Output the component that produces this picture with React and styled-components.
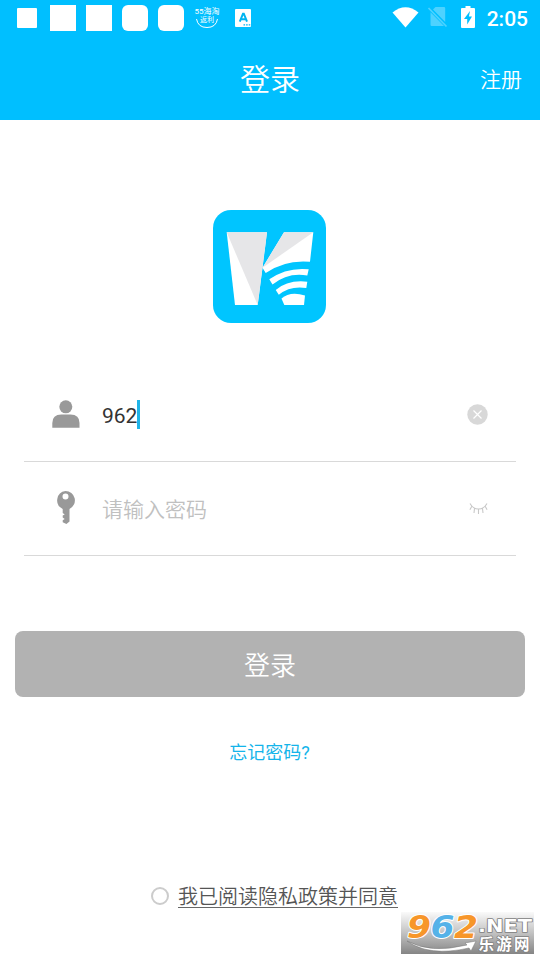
import React, { useState } from 'react'
import styled, { createGlobalStyle } from 'styled-components'

const GlobalStyle = createGlobalStyle`
  * {
    box-sizing: border-box;
  }
  body {
    margin: 0;
    background: #fff;
    font-family: Roboto, 'Noto Sans CJK SC', sans-serif;
  }
  svg {
    display: block;
    flex: none;
    overflow: visible;
  }
`

const Page = styled.div`
  position: relative;
  width: 540px;
  height: 960px;
  overflow: hidden;
  background: #fff;
`

const StatusBar = styled.div`
  display: flex;
  justify-content: space-between;
  height: 36px;
  padding: 0 12px 0 17px;
  background: #00bfff;
  color: #fff;
`

const StatusGroup = styled.div`
  display: flex;
  align-items: center;
`

const SystemIcons = styled.div`
  display: flex;
  align-items: center;
  height: 36px;
  padding-bottom: 2px;
`

const AppSquare = styled.i`
  width: ${(props) => props.$size}px;
  height: ${(props) => props.$size}px;
  margin-right: ${(props) => props.$gap}px;
  border-radius: ${(props) => props.$radius || 0}px;
  background: #fff;
`

const MiniApp = styled.div`
  display: flex;
  flex-direction: column;
  align-items: center;
  width: 26px;
  height: 24px;
  margin-right: 15px;
  padding-top: 1px;
  white-space: nowrap;
  line-height: 9px;
  svg {
    margin-top: -7px;
  }
`

const MiniLabel = styled.span`
  font-size: ${(props) => props.$size}px;
`

const Clock = styled.span`
  margin-left: 12px;
  padding-top: 2px;
  font-size: 21px;
  font-weight: 500;
  line-height: 34px;
`

const NavBar = styled.header`
  display: grid;
  grid-template-columns: 1fr auto 1fr;
  align-items: center;
  height: 84px;
  padding: 3px 18px 0;
  background: #00bfff;
  color: #fff;
`

const Title = styled.h1`
  grid-column: 2;
  margin: 0;
  font-size: 30px;
  font-weight: 350;
  line-height: 40px;
`

const Register = styled.a`
  justify-self: end;
  font-size: 21px;
  font-weight: 350;
  line-height: 30px;
`

const LogoWrap = styled.div`
  display: flex;
  justify-content: center;
  padding: 90px 1px 0 0;
  height: 248px;
`

const Form = styled.div`
  margin: 0 24px;
`

const Field = styled.label`
  display: flex;
  align-items: center;
  height: 94px;
  padding: 0 28.5px 1px 28px;
  border-bottom: 1px solid #d9d9d9;
`

const FieldText = styled.div`
  flex: 1;
  display: flex;
  align-items: center;
  margin-left: 22px;
  padding-top: 3px;
  font-size: 21px;
  font-weight: ${(props) => (props.$empty ? 350 : 400)};
  line-height: 30px;
  color: ${(props) => (props.$empty ? '#c0c0c0' : '#333')};
`

const Caret = styled.i`
  width: 3px;
  height: 29px;
  margin-top: -2px;
  background: #1fb4e8;
`

const LoginButton = styled.button`
  display: block;
  width: 510px;
  height: 66px;
  margin: 75px auto 0;
  padding: 0 0 1px;
  border: 0;
  border-radius: 8px;
  background: #b2b2b2;
  color: #fff;
  font-family: inherit;
  font-size: 26px;
  font-weight: 350;
`

const Forgot = styled.a`
  display: block;
  margin: 42px 1px 0 0;
  text-align: center;
  font-size: 18px;
  line-height: 28px;
  color: #14b4ea;
`

const Agreement = styled.div`
  display: flex;
  align-items: center;
  margin: 115px 0 0 151px;
`

const Radio = styled.i`
  width: 18px;
  height: 18px;
  margin: 2px 9px 0 0;
  border: 2px solid #ccc;
  border-radius: 50%;
`

const AgreementLink = styled.span`
  height: 26px;
  line-height: 30px;
  border-bottom: 1px solid #666;
  font-size: 20px;
  font-weight: 350;
  color: #555;
`

const Watermark = styled.div`
  position: absolute;
  left: 401px;
  top: 912px;
  width: 133px;
  height: 42px;
  background: linear-gradient(#fafafa, #c2c2c2 50%, #858585);
`

const AppLogo = () => (
  <svg width="113" height="113" viewBox="0 0 113 113">
    <rect width="113" height="113" rx="18" fill="#00c5ff" />
    <path d="M13.7 22.3H54L44.7 95H22Z" fill="#fff" />
    <path d="M13.7 22.3H54L44.7 95Z" fill="#e6e6e8" />
    <path d="M71 22.3H100.3L97 51.7Q72 49.5 52.7 63L49.5 57.7Z" fill="#fff" />
    <path d="M71 22.3H100.3L49.5 57.7Z" fill="#e6e6e8" />
    <path d="M56.3 69.3Q74 57 95.7 59.3L94.3 65.5Q75 62 59.5 74.5Z" fill="#fff" />
    <path d="M62.7 80Q75 69.5 94.3 71.7L93.3 78Q77 75.5 65.8 84.8Z" fill="#fff" />
    <path d="M68.5 88.5Q77 81 92 85.500L91 95H71.3Z" fill="#fff" />
  </svg>
)

const TranslateIcon = () => (
  <svg width="17" height="18" viewBox="0 0 17 18">
    <rect width="16" height="18" rx="1" fill="#fff" />
    <path d="M4.800 12.700 8 4.700h.8l3.200 8M5.900 10.200h5" fill="none" stroke="#00b4f0" strokeWidth="2" />
    <path d="M8.500 15.800h1.600m1 0h1.600m1 0h1.600" stroke="#00b4f0" strokeWidth="1.300" />
  </svg>
)

const WifiIcon = () => (
  <svg width="27" height="21" viewBox="0 0 27 21">
    <path d="M.5 5.500Q13.500-5.200 26.500 5.500L13.500 20.500Z" fill="#fff" />
  </svg>
)

const NoSimIcon = () => (
  <svg width="20" height="22" viewBox="0 0 20 22">
    <path d="M7.500 1H16q1.200 0 1.200 1.200V16L5 3.600ZM2.500 6.200 16 20H3.700q-1.200 0-1.200-1.200Z" fill="#4dd2ff" />
    <path d="m.5 2 18 18.500" stroke="#4dd2ff" strokeWidth="1.700" />
  </svg>
)

const BatteryIcon = () => (
  <svg width="14" height="22" viewBox="0 0 14 22">
    <path d="M4.500 0h5v2H13q1 0 1 1v18q0 1-1 1H1q-1 0-1-1V3q0-1 1-1h3.500Z" fill="#fff" />
    <path d="M9 5 3 13h3.200v5.500L11 10.500H7.900Z" fill="#00bfff" />
  </svg>
)

const UserIcon = () => (
  <svg width="28" height="28" viewBox="0 0 28 28">
    <circle cx="13.800" cy="6.800" r="6.500" fill="#999" />
    <path d="M.3 27.700V23q0-8.500 9-8.500h9.200q9 0 9 8.500v4.700Z" fill="#999" />
  </svg>
)

const KeyIcon = () => (
  <svg width="28" height="34" viewBox="0 0 28 34">
    <path
      fillRule="evenodd"
      d="M13.500 0a9.400 9.400 0 0 1 4 17.900V30.500L14.400 33 10.700 31.300v-2l2-1.200-2-1.500v-2l2-1.200-2-1.500v-4A9.400 9.400 0 0 1 13.500 0Zm0 2.600a3 3 0 1 0 0 6 3 3 0 0 0 0-6Z"
      fill="#999"
    />
  </svg>
)

const ClearIcon = () => (
  <svg width="21" height="21" viewBox="0 0 21 21">
    <circle cx="10.500" cy="10.500" r="10.200" fill="#d8d8d8" />
    <path d="m6.500 6.500 8 8m0-8-8 8" stroke="#fff" strokeWidth="1.200" />
  </svg>
)

const EyeClosedIcon = () => (
  <svg width="19" height="13" viewBox="0 0 19 13">
    <path
      d="M1 1.500Q4 7 9.500 7T18 1.500M2.700 4.500.9 7.800M5.500 6.500 5 11M9.500 7v5M13.500 6.500 14 11M16.300 4.500l1.800 3.300"
      fill="none"
      stroke="#c8c8c8"
      strokeWidth="1.100"
    />
  </svg>
)

const digits = [
  { char: '9', x: 6, color: '#f7962a' },
  { char: '6', x: 29.5, color: '#55b2e8' },
  { char: '2', x: 53, color: '#f7962a' },
]

const SiteMark = () => (
  <svg width="133" height="42" viewBox="0 0 133 42">
    <g fontFamily="'DejaVu Sans', sans-serif" fontWeight="700" fontStyle="italic" fontSize="32">
      {digits.map((d) => (
        <text
          key={d.char}
          x={d.x}
          y="26"
          textLength="24"
          lengthAdjust="spacingAndGlyphs"
          fill={d.color}
          stroke="#fff"
          strokeWidth="2"
          paintOrder="stroke"
          strokeLinejoin="round">
          {d.char}
        </text>
      ))}
    </g>
    <path d="M6 29Q29 42 66 33L64 31 75 29 70 39 68 36Q28 45 6 29Z" fill="#fff" stroke="#777" strokeWidth=".5" />
    <g fill="#fff" stroke="#808080" strokeWidth="1.500" paintOrder="stroke" strokeLinejoin="round">
      <text
        x="77"
        y="20"
        fontFamily="'DejaVu Sans', sans-serif"
        fontWeight="700"
        fontSize="17"
        textLength="54"
        lengthAdjust="spacingAndGlyphs">
        .NET
      </text>
      <text x="77.500" y="37.500" fontFamily="'Noto Sans CJK SC', sans-serif" fontWeight="700" fontSize="15.500" textLength="51">
        乐游网
      </text>
    </g>
  </svg>
)

// notification icons on the left of the status bar
const squares = [
  { size: 20, gap: 13, radius: 1 },
  { size: 26, gap: 10 },
  { size: 26, gap: 10 },
  { size: 26, gap: 10, radius: 6 },
  { size: 26, gap: 10, radius: 6 },
]

function App() {
  const [account] = useState('962')

  return (
    <Page>
      <GlobalStyle />
      <StatusBar>
        <StatusGroup>
          {squares.map((item, i) => (
            <AppSquare key={i} $size={item.size} $gap={item.gap} $radius={item.radius} />
          ))}
          <MiniApp>
            <MiniLabel $size={8}>55海淘</MiniLabel>
            <MiniLabel $size={7}>返利</MiniLabel>
            <svg width="24" height="11" viewBox="0 0 24 11">
              <path d="M1.500 1Q3 9.500 12 9.500T22.500 1" fill="none" stroke="#fff" />
            </svg>
          </MiniApp>
          <TranslateIcon />
        </StatusGroup>
        <StatusGroup>
          <SystemIcons>
            <WifiIcon />
            <svg width="9" height="1" />
            <NoSimIcon />
            <svg width="13" height="1" />
            <BatteryIcon />
          </SystemIcons>
          <Clock>2:05</Clock>
        </StatusGroup>
      </StatusBar>
      <NavBar>
        <Title>登录</Title>
        <Register>注册</Register>
      </NavBar>

      <LogoWrap>
        <AppLogo />
      </LogoWrap>

      <Form>
        <Field>
          <UserIcon />
          <FieldText>
            {account}
            <Caret />
          </FieldText>
          <ClearIcon />
        </Field>
        <Field>
          <KeyIcon />
          <FieldText $empty>请输入密码</FieldText>
          <EyeClosedIcon />
        </Field>
      </Form>

      <LoginButton>登录</LoginButton>
      <Forgot>忘记密码?</Forgot>
      <Agreement>
        <Radio />
        <AgreementLink>我已阅读隐私政策并同意</AgreementLink>
      </Agreement>

      <Watermark>
        <SiteMark />
      </Watermark>
    </Page>
  )
}

export default App
